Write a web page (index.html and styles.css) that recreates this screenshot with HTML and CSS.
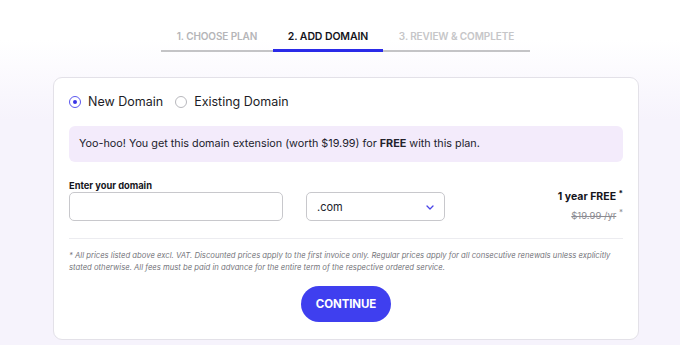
FILE: index.html
```html
<!DOCTYPE html>
<html>
<head>
<meta charset="utf-8">
<link rel="stylesheet" href="styles.css">
</head>
<body>
<div class="page">
  <nav class="steps">
    <div class="step done">1. CHOOSE PLAN</div>
    <div class="step active">2. ADD DOMAIN</div>
    <div class="step todo">3. REVIEW &amp; COMPLETE</div>
  </nav>
  <main class="card">
    <div class="radios">
      <label class="radio"><span class="dot on"></span>New Domain</label>
      <label class="radio"><span class="dot"></span>Existing Domain</label>
    </div>
    <div class="notice">Yoo-hoo! You get this domain extension (worth $19.99) for <b>FREE</b> with this plan.</div>
    <div class="form-row">
      <div class="field">
        <div class="label">Enter your domain</div>
        <div class="input"></div>
      </div>
      <div class="select">
        <span>.com</span>
        <svg class="chev" width="8" height="5" viewBox="0 0 8 5"><path d="M1 1l3 3 3-3" fill="none" stroke="#4a45e8" stroke-width="1.3" stroke-linecap="round" stroke-linejoin="round"/></svg>
      </div>
      <div class="price">
        <div class="free">1 year FREE <sup>*</sup></div>
        <div class="old"><s>$19.99 /yr</s> <sup>*</sup></div>
      </div>
    </div>
    <div class="divider"></div>
    <p class="foot">* All prices listed above excl. VAT. Discounted prices apply to the first invoice only. Regular prices apply for all consecutive renewals unless explicitly stated otherwise. All fees must be paid in advance for the entire term of the respective ordered service.</p>
    <div class="actions"><button class="btn">CONTINUE</button></div>
  </main>
</div>
</body>
</html>
```
FILE: styles.css
```css
* { box-sizing: border-box; }
html, body { margin: 0; height: 100%; }
body {
  font-family: Inter, "Noto Sans", sans-serif;
  color: #1c1c28;
  background: linear-gradient(#ffffff 0px, #ffffff 40px, #f6f3fc 120px, #f6f3fc 100%);
}
.page {
  width: 680px;
  height: 345px;
  padding-top: 30px;
  display: flex;
  flex-direction: column;
  align-items: flex-start;
  overflow: hidden;
}
.steps {
  display: flex;
  margin-left: 161px;
}
.step {
  font-size: 10px;
  font-weight: 600;
  color: #b5b5b8;
  padding-bottom: 7px;
  border-bottom: 2px solid #c4c4c6;
  text-align: center;
  letter-spacing: -0.1px;
}
.step.done { width: 112px; }
.step.active { width: 110px; color: #15151c; border-bottom: 3px solid #2a2ae8; padding-bottom: 6px; font-size: 10.5px; }
.step.todo { width: 147px; color: #c6c6c8; }
.card {
  margin-top: 25px;
  margin-left: 53px;
  width: 586px;
  height: 263px;
  background: #fff;
  border: 1px solid #e3e1e8;
  border-radius: 9px;
  padding: 16px 15px 0 15px;
}
.radios { display: flex; gap: 12px; align-items: center; }
.radio {
  display: flex; align-items: center; gap: 7px;
  font-size: 12.5px; color: #1c1c26;
}
.dot {
  width: 12px; height: 12px; border-radius: 50%;
  border: 1px solid #b8b8bd;
  display: inline-flex; align-items: center; justify-content: center;
}
.dot.on { border-color: #5b57ee; }
.dot.on::after { content: ""; width: 4px; height: 4px; border-radius: 50%; background: #3a34e6; }
.notice {
  margin-top: 17px;
  height: 36px;
  background: #f3ebfb;
  border-radius: 6px;
  font-size: 10.8px;
  padding: 11px 10px 0 10px;
  color: #22222c;
}
.notice b { font-weight: 700; }
.form-row {
  display: flex;
  align-items: flex-start;
  margin-top: 16px;
}
.field { width: 214px; }
.label { font-size: 9.3px; font-weight: 700; color: #15151c; height: 14px; padding-top: 2px; }
.input {
  height: 29px;
  border: 1px solid #c8c8cc;
  border-radius: 5px;
}
.select {
  margin-left: 23px;
  margin-top: 14px;
  width: 139px; height: 29px;
  border: 1px solid #c8c8cc;
  border-radius: 5px;
  display: flex; align-items: center; justify-content: space-between;
  padding: 0 10px 0 10px;
  font-size: 11px; color: #22222c;
}
.chev { margin-top: 1px; }
.price {
  margin-left: auto;
  text-align: right;
  padding-top: 12px;
}
.price sup { font-size: 8px; vertical-align: 0; position: relative; top: -4px; }
.free { font-size: 10.5px; font-weight: 700; color: #15151c; }
.old { font-size: 9.5px; color: #8c8c92; margin-top: 7px; }
.divider { margin-top: 17px; height: 1px; background: #ececf0; }
.foot {
  margin: 11px 0 0 0;
  font-size: 7.7px;
  font-style: italic;
  line-height: 12px;
  color: #76767c;
}
.actions { display: flex; justify-content: center; margin-top: 12px; }
.btn {
  width: 90px; height: 36px;
  border: none; border-radius: 18px;
  background: #3f3fef;
  color: #fff;
  font-family: inherit;
  font-size: 11.5px;
  font-weight: 700;
  letter-spacing: -0.1px;
}
```
